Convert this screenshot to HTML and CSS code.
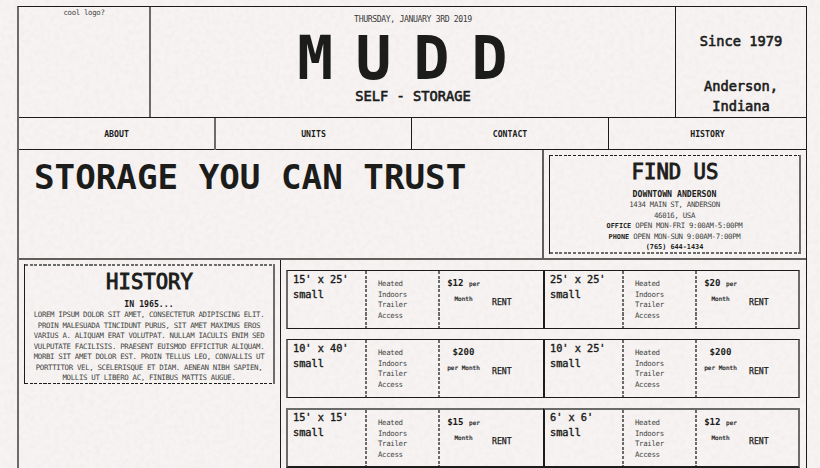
FILE: index.html
```html
<!DOCTYPE html>
<html lang="en">
<head>
<meta charset="utf-8">
<title>Mudd Self-Storage</title>
<link rel="stylesheet" href="styles.css">
</head>
<body>
<svg class="paper" aria-hidden="true"><filter id="grain"><feTurbulence type="fractalNoise" baseFrequency="0.2" numOctaves="3" seed="4"/><feColorMatrix values="0 0 0 0 0.45  0 0 0 0 0.4  0 0 0 0 0.38  0.14 0 0 0 -0.05"/></filter><rect width="100%" height="100%" filter="url(#grain)"/></svg>
<main class="page">
  <header class="masthead">
    <div class="logo">cool logo?</div>
    <div class="brand">
      <p class="date">THURSDAY, JANUARY 3RD 2019</p>
      <h1>MUDD</h1>
      <h2>SELF - STORAGE</h2>
    </div>
    <div class="since"><p>Since 1979</p><p>Anderson, Indiana</p></div>
  </header>
  <nav><a>ABOUT</a><a>UNITS</a><a>CONTACT</a><a>HISTORY</a></nav>
  <section class="hero">
    <h2 class="slogan">STORAGE YOU CAN TRUST</h2>
    <div class="find">
      <div class="dashed">
        <h3>FIND US</h3>
        <h4>DOWNTOWN ANDERSON</h4>
        <p>1434 MAIN ST, ANDERSON<br>46016, USA<br><b>OFFICE</b> OPEN MON-FRI 9:00AM-5:00PM<br><b>PHONE</b> OPEN MON-SUN 9:00AM-7:00PM<br><b>(765) 644-1434</b></p>
      </div>
    </div>
  </section>
  <section class="content">
    <div class="history">
      <div class="dashed">
        <h3>HISTORY</h3>
        <h4>IN 1965...</h4>
        <p>LOREM IPSUM DOLOR SIT AMET, CONSECTETUR ADIPISCING ELIT.<br>PROIN MALESUADA TINCIDUNT PURUS, SIT AMET MAXIMUS EROS<br>VARIUS A. ALIQUAM ERAT VOLUTPAT. NULLAM IACULIS ENIM SED<br>VULPUTATE FACILISIS. PRAESENT EUISMOD EFFICITUR ALIQUAM.<br>MORBI SIT AMET DOLOR EST. PROIN TELLUS LEO, CONVALLIS UT<br>PORTTITOR VEL, SCELERISQUE ET DIAM. AENEAN NIBH SAPIEN,<br>MOLLIS UT LIBERO AC, FINIBUS MATTIS AUGUE.</p>
      </div>
    </div>
    <div class="units">
      <article class="unit"><div class="size">15' x 25'<br>small</div><div class="features">Heated<br>Indoors<br>Trailer<br>Access</div><div class="offer"><div class="price">$12 <small>per<br>Month</small></div><a class="rent">RENT</a></div></article>
      <article class="unit"><div class="size">25' x 25'<br>small</div><div class="features">Heated<br>Indoors<br>Trailer<br>Access</div><div class="offer"><div class="price">$20 <small>per<br>Month</small></div><a class="rent">RENT</a></div></article>
      <article class="unit"><div class="size">10' x 40'<br>small</div><div class="features">Heated<br>Indoors<br>Trailer<br>Access</div><div class="offer"><div class="price">$200<br><small>per Month</small></div><a class="rent">RENT</a></div></article>
      <article class="unit"><div class="size">10' x 25'<br>small</div><div class="features">Heated<br>Indoors<br>Trailer<br>Access</div><div class="offer"><div class="price">$200<br><small>per Month</small></div><a class="rent">RENT</a></div></article>
      <article class="unit shade"><div class="size">15' x 15'<br>small</div><div class="features">Heated<br>Indoors<br>Trailer<br>Access</div><div class="offer"><div class="price">$15 <small>per<br>Month</small></div><a class="rent">RENT</a></div></article>
      <article class="unit shade"><div class="size">6' x 6'<br>small</div><div class="features">Heated<br>Indoors<br>Trailer<br>Access</div><div class="offer"><div class="price">$12 <small>per<br>Month</small></div><a class="rent">RENT</a></div></article>
    </div>
  </section>
</main>
</body>
</html>
```
FILE: styles.css
```css
* { box-sizing: border-box; margin: 0; padding: 0; }
:root { --ink: #1c1c1b; --soft: #6b6b69; }
html, body { height: 100%; overflow: hidden; }
body {
  background: #f6f3f2;
  color: var(--ink);
  font: 7.4px/10.5px "DejaVu Sans Mono", monospace;
  letter-spacing: -0.33px;
  padding: 6px 13px 0 17px;
}
.paper { position: absolute; inset: 0; width: 100%; height: 100%; }
.page {
  position: relative;
  height: 470px;
  border: 1px solid var(--ink);
  border-left: 2px solid var(--soft);
  display: flex;
  flex-direction: column;
}
h1, h2, h3, h4, b, nav, .since, .size, .price, .rent { letter-spacing: 0; }
h1, h2, h3, h4 { font-weight: normal; }

.masthead {
  display: grid;
  grid-template-columns: 132px 524px 1fr;
  height: 111px;
  border-bottom: 1px solid var(--ink);
  text-align: center;
}
.logo { border-right: 2px solid var(--soft); color: #444; padding-top: 1px; }
.brand { padding-top: 6px; }
.date { font-size: 8.2px; letter-spacing: -0.4px; line-height: 12px; color: #3b3b3a; }
h1 { font-size: 59.6px; line-height: 60px; font-weight: bold; letter-spacing: 22.2px; padding: 4px 0 0 1px; white-space: nowrap; }
.brand h2 { font-size: 13.7px; line-height: 15px; -webkit-text-stroke: 0.6px; }
.since {
  border-left: 1px solid var(--ink);
  padding: 24px 20px 0;
  font-size: 13.7px;
  line-height: 20.7px;
  -webkit-text-stroke: 0.6px;
}
.since p + p { margin-top: 24px; }

nav {
  display: grid;
  grid-template-columns: 197px 195px 197px 1fr;
  height: 32px;
  border-bottom: 1px solid var(--ink);
  font-size: 8.2px;
  line-height: 32px;
  text-align: center;
  font-weight: bold;
}
nav a + a { border-left: 1px solid var(--ink); }
nav a:first-child { border-right: 2px solid var(--soft); }
nav a:nth-child(2) { border-left: 0; }

.hero {
  display: grid;
  grid-template-columns: 1fr 263px;
  height: 110px;
  border-bottom: 2px solid #5f605c;
}
.slogan { font-size: 34.2px; line-height: 40px; font-weight: bold; padding: 7px 0 0 15px; white-space: nowrap; }
.find { border-left: 2px solid #5f605c; padding: 5px 5px 4px; margin-left: -1px; }
.dashed {
  --dash-top: var(--ink);
  --dash-bottom: var(--soft);
  --top: 1px;
  --bottom: 2px;
  border-left: 1px solid var(--ink);
  border-right: 2px solid var(--soft);
  padding: 1px 0 0;
  text-align: center;
  white-space: nowrap;
  background:
    repeating-linear-gradient(90deg, var(--dash-top) 0 3.1px, transparent 3.1px 4.6px) top / 100% var(--top) no-repeat,
    repeating-linear-gradient(90deg, var(--dash-bottom) 0 3.1px, transparent 3.1px 4.6px) bottom / 100% var(--bottom) no-repeat;
}
.dashed h3 { font-size: 20.6px; line-height: 32px; -webkit-text-stroke: 0.9px; padding-left: 1px; }
.dashed h4 { font-size: 8.2px; line-height: 12px; font-weight: bold; }
.dashed p { color: #444542; }
.dashed b { color: var(--ink); font-size: 6.85px; }
.find .dashed { height: 99px; }

.content { display: grid; grid-template-columns: 261px 1fr; flex: 1; }
.history { padding: 4px 5px; }
.history .dashed { height: 120px; padding-top: 2px; --dash-top: var(--soft); --dash-bottom: var(--ink); --top: 2px; --bottom: 1px; }
.units {
  border-left: 1px solid var(--ink);
  padding: 10px 5px 0;
  display: grid;
  grid-template-columns: 257px 257px;
  grid-auto-rows: 59px;
  row-gap: 10px;
  align-content: start;
}
.unit {
  border: 1px solid var(--ink);
  border-left: 2px solid var(--soft);
  display: grid;
  grid-template-columns: 79px 73px 1fr;
}
.unit:nth-child(odd) { border-right: 0; }
.unit:nth-child(even) { border-left: 2px solid var(--ink); border-right: 2px solid var(--soft); }
.unit.shade { border-top: 2px solid var(--soft); border-bottom-width: 2px; height: 60px; }
.size, .features { background: repeating-linear-gradient(180deg, var(--soft) 0 3.1px, transparent 3.1px 4.6px) right / 2px 100% no-repeat; }
.size { font-size: 10.25px; line-height: 15.2px; padding: 1px 0 0 5px; -webkit-text-stroke: 0.4px; }
.features { padding: 8px 0 0 11px; color: #444542; }
.shade .size { padding-top: 0; }
.offer { display: flex; }
.price { width: 49px; padding: 5px 2px 0 0; font-size: 9.1px; line-height: 15.3px; font-weight: bold; text-align: center; white-space: nowrap; }
.price small { font-size: 6px; font-weight: normal; -webkit-text-stroke: 0.2px; }
.rent { padding: 25px 0 0 3px; font-size: 8.2px; line-height: 12px; -webkit-text-stroke: 0.25px; }
```
